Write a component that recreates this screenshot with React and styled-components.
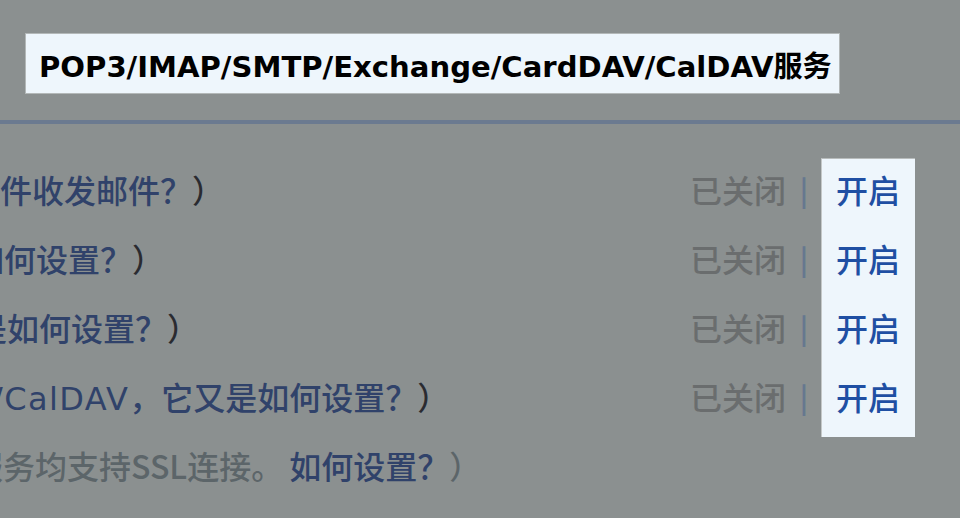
import React from "react";
import styled, { createGlobalStyle } from "styled-components";

const GlobalStyle = createGlobalStyle`
  html, body {
    margin: 0;
    padding: 0;
    background: #8b9090;
  }
  #root {
    width: 960px;
    height: 518px;
    overflow: hidden;
  }
`;

const CJK = `"Noto Sans CJK SC", "DejaVu Sans", sans-serif`;

const Page = styled.div`
  width: 960px;
  height: 518px;
  background: #8b9090;
  overflow: hidden;
  display: flex;
  flex-direction: column;
  font-family: ${CJK};
`;

const Header = styled.header`
  display: flex;
  padding: 33px 0 26px 25px;
`;

const TitleBox = styled.h2`
  margin: 0;
  box-sizing: border-box;
  width: 815px;
  height: 61px;
  display: flex;
  align-items: center;
  padding: 0 0 0 13px;
  background: #eef6fc;
  border: 1px solid #b3b8b8;
  color: #000;
  font-family: "DejaVu Sans", "Noto Sans CJK SC", sans-serif;
  font-weight: bold;
  font-size: 29.1px;
  white-space: nowrap;
  overflow: hidden;
`;

const Divider = styled.hr`
  margin: 0;
  border: 0;
  height: 4px;
  background: #6b7a90;
`;

const List = styled.div`
  display: grid;
  grid-template-columns: 1fr 97px 34px 94px;
  grid-auto-rows: 69px;
  align-items: center;
  padding: 30px 45px 0 0;
  font-size: 32px;
  font-weight: 500;
`;

const Desc = styled.div`
  grid-column: 1;
  grid-row: ${(p) => p.$row};
  overflow: hidden;
  white-space: nowrap;
  text-indent: ${(p) => p.$shift}px;
  color: ${(p) => (p.$muted ? "#5c6569" : "#33456c")};
  font-family: ${CJK};
`;

const Link = styled.span`
  color: #30426a;
  margin-left: ${(p) => p.$gap || 0}px;
`;

const Paren = styled.span`
  color: ${(p) => (p.$muted ? "#5c6569" : "#2a2b30")};
`;

const Latin = styled.span`
  font-family: "DejaVu Sans", sans-serif;
  font-weight: normal;
  letter-spacing: 1.4px;
`;

const Status = styled.div`
  grid-column: 2;
  grid-row: ${(p) => p.$row};
  color: #6a6d6e;
  white-space: nowrap;
`;

const Sep = styled.div`
  grid-column: 3;
  grid-row: ${(p) => p.$row};
  text-align: center;
  color: #66788f;
  font-size: 28px;
  font-weight: bold;
`;

const Highlight = styled.div`
  grid-column: 4;
  grid-row: 1 / span 4;
  align-self: stretch;
  margin: 4px 0 -7px;
  background: #eef6fc;
  border-top: 1px solid #b8bcbc;
  border-left: 1px solid #c4c8c8;
`;

const Action = styled.a`
  grid-column: 4;
  grid-row: ${(p) => p.$row};
  text-align: center;
  color: #1f4fa3;
  text-decoration: none;
  cursor: pointer;
`;

const rows = [
  { shift: 0, body: <><Link>件收发邮件？</Link><Paren>）</Paren></> },
  { shift: -28, body: <><Link>如何设置？</Link><Paren>）</Paren></> },
  { shift: -25, body: <><Link>是如何设置？</Link><Paren>）</Paren></> },
  {
    shift: -8,
    body: (
      <>
        <Link>
          <Latin>/CalDAV</Latin>，它又是如何设置？
        </Link>
        <Paren>）</Paren>
      </>
    ),
  },
];

export default function App() {
  return (
    <Page>
      <GlobalStyle />
      <Header>
        <TitleBox>POP3/IMAP/SMTP/Exchange/CardDAV/CalDAV服务</TitleBox>
      </Header>
      <Divider />
      <List>
        <Highlight />
        {rows.map((r, i) => (
          <React.Fragment key={i}>
            <Desc $row={i + 1} $shift={r.shift}>
              {r.body}
            </Desc>
            <Status $row={i + 1}>已关闭</Status>
            <Sep $row={i + 1}>|</Sep>
            <Action $row={i + 1}>开启</Action>
          </React.Fragment>
        ))}
        <Desc $row={5} $shift={-29} $muted>
          服务均支持SSL连接。
          <Link $gap={6}>如何设置？</Link>
          <Paren $muted>）</Paren>
        </Desc>
      </List>
    </Page>
  );
}
